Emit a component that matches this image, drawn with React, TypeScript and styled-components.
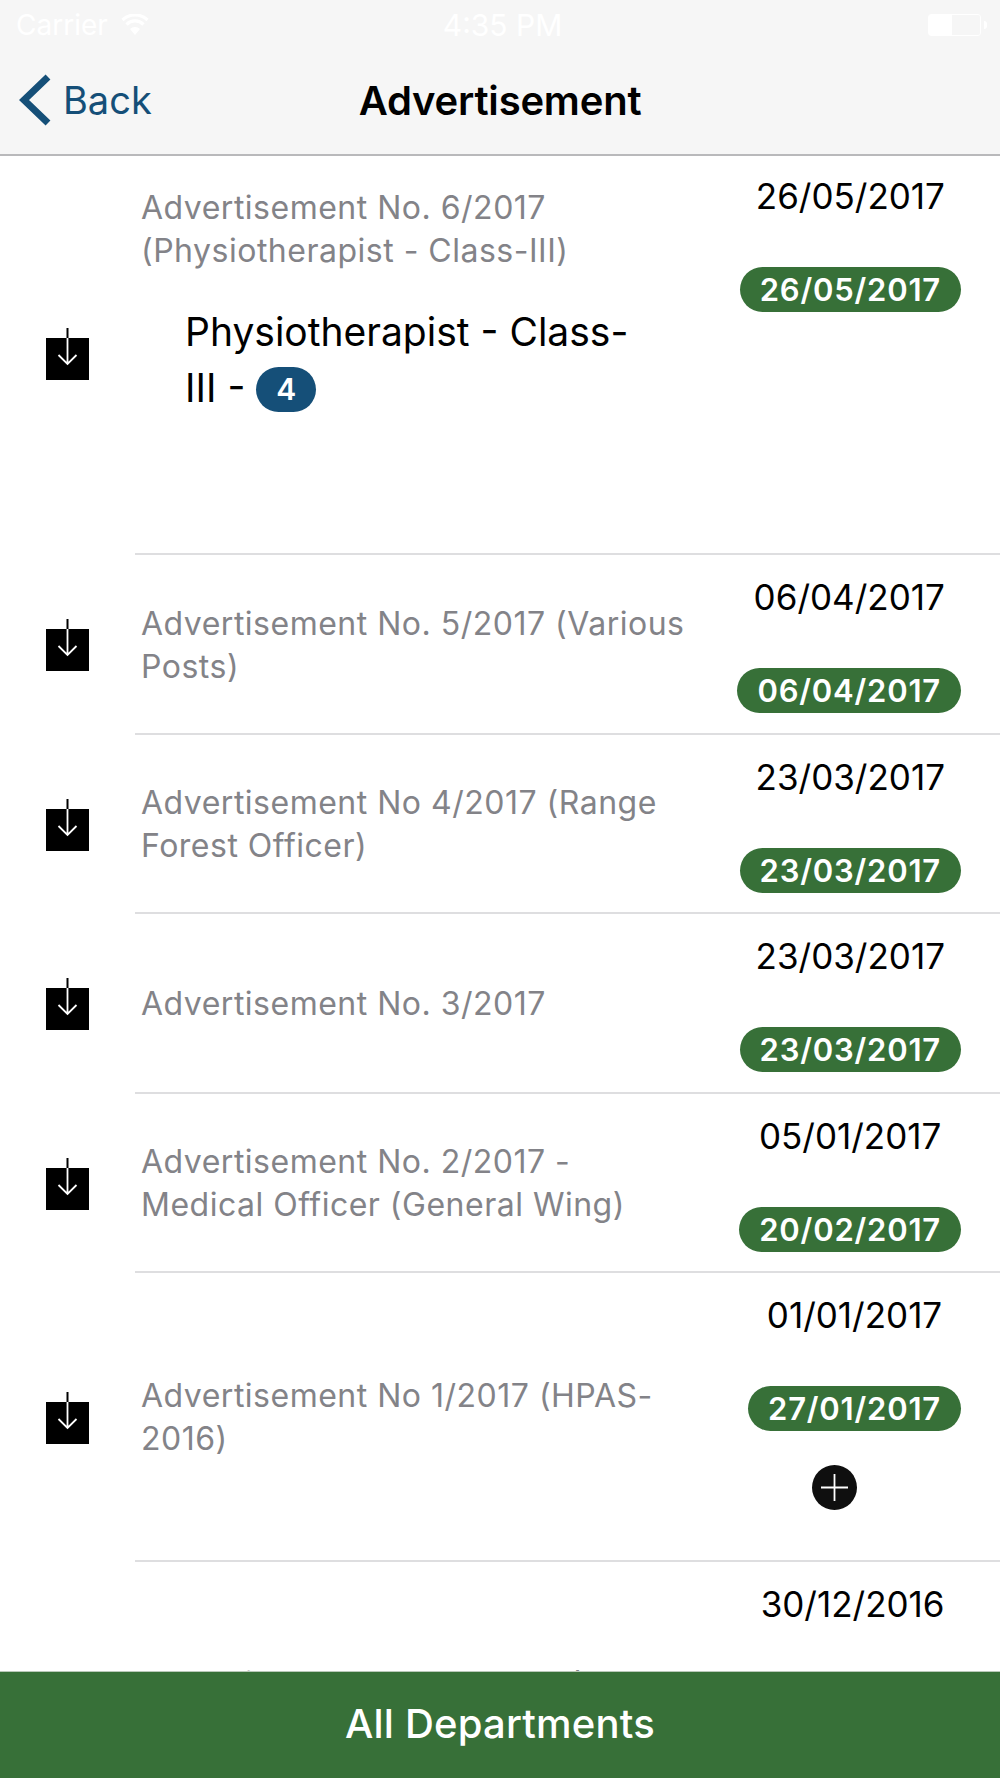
import React from 'react';
import styled, { createGlobalStyle } from 'styled-components';

const GlobalStyle = createGlobalStyle`
  html, body {
    margin: 0;
    padding: 0;
    background: #fff;
  }
  body {
    font-family: Inter, "Liberation Sans", sans-serif;
  }
`;

const Screen = styled.div`
  position: relative;
  width: 1000px;
  height: 1778px;
  overflow: hidden;
  background: #fff;
`;

const TopBar = styled.header`
  height: 154px;
  background: #f6f6f6;
  border-bottom: 2px solid #b9b9bb;
  box-sizing: content-box;
`;

const StatusBar = styled.div`
  display: grid;
  grid-template-columns: 1fr auto 1fr;
  align-items: center;
  height: 50px;
  padding: 0 19px 0 16px;
  color: #fff;
  font-size: 28px;
`;

const Carrier = styled.div`
  display: flex;
  align-items: center;
  gap: 13px;
`;

const Clock = styled.div`
  margin-left: 8px;
  font-size: 30px;
`;

const Battery = styled.div`
  position: relative;
  justify-self: end;
  width: 53px;
  height: 22px;
  border: 1px solid #fff;
  border-radius: 3px;
  box-sizing: border-box;
  background: linear-gradient(to right, #fff 45%, transparent 45%);
  &::after {
    content: '';
    position: absolute;
    right: -7px;
    top: 6px;
    width: 3px;
    height: 8px;
    border-radius: 0 3px 3px 0;
    background: #fff;
  }
`;

const NavBar = styled.nav`
  position: relative;
  display: flex;
  align-items: center;
  justify-content: center;
  height: 100px;
`;

const BackLink = styled.a`
  position: absolute;
  left: 19px;
  top: 0;
  bottom: 0;
  display: flex;
  align-items: center;
  gap: 12px;
  color: #154f78;
  font-size: 38px;
`;

const NavTitle = styled.h1`
  margin: 0;
  color: #000;
  font-size: 40px;
  font-weight: 600;
  letter-spacing: -0.2px;
`;

const Row = styled.div<{ $height: number }>`
  position: relative;
  display: flex;
  align-items: stretch;
  height: ${(p) => p.$height}px;
  box-sizing: border-box;
  &::after {
    content: '';
    position: absolute;
    left: 135px;
    right: 0;
    bottom: 0;
    height: 2px;
    background: #dedee0;
  }
`;

const IconCell = styled.div<{ $top?: boolean }>`
  flex: 0 0 135px;
  display: flex;
  align-items: center;
  justify-content: center;
  padding-bottom: ${(p) => (p.$top ? 3 : 0)}px;
`;

const Body = styled.div<{ $top?: boolean }>`
  flex: 0 0 552px;
  margin-left: 6px;
  display: flex;
  flex-direction: column;
  justify-content: ${(p) => (p.$top ? 'flex-start' : 'center')};
  padding: ${(p) => (p.$top ? '30px 0 0' : '0 0 1px')};
`;

const Title = styled.div<{ $lines?: number }>`
  min-height: ${(p) => (p.$lines ?? 1) * 43}px;
  color: #838388;
  font-size: 32px;
  line-height: 43px;
  letter-spacing: 0.5px;
`;

const SubPost = styled.div`
  margin: 32px 0 0 44px;
  width: 470px;
  color: #000;
  font-size: 39px;
  line-height: 56px;
`;

const CountBadge = styled.span`
  display: inline-block;
  min-width: 60px;
  height: 45px;
  border-radius: 23px;
  background: #154f78;
  color: #fff;
  font-size: 30px;
  font-weight: 600;
  line-height: 45px;
  text-align: center;
  vertical-align: 2px;
`;

const DateCell = styled.div<{ $top?: boolean }>`
  margin-left: auto;
  margin-right: 39px;
  display: flex;
  flex-direction: column;
  align-items: center;
  padding-top: ${(p) => (p.$top ? 19 : 21)}px;
`;

const DateText = styled.div`
  color: #000;
  font-size: 35px;
  line-height: 42px;
`;

const DatePill = styled.div`
  margin-top: 50px;
  height: 45px;
  padding: 0 20px;
  border-radius: 23px;
  background: #377038;
  color: #fff;
  font-size: 31px;
  font-weight: 600;
  line-height: 45px;
  letter-spacing: 0.8px;
`;

const PlusButton = styled.div`
  margin: 34px 40px 0 0;
  width: 45px;
  height: 45px;
  line-height: 0;
`;

const BottomButton = styled.button`
  position: absolute;
  left: 0;
  right: 0;
  bottom: 0;
  height: 107px;
  padding: 0 0 4px;
  border: none;
  border-top: 1px solid #b9c9b9;
  background: #377038;
  color: #fff;
  font-family: inherit;
  font-size: 40px;
  font-weight: 500;
  letter-spacing: 0.2px;
`;

function WifiIcon() {
  return (
    <svg width="28" height="22" viewBox="0 0 28 22">
      <path d="M14 21 9 15a7 7 0 0 1 10 0Z" fill="#fff" />
      <path d="M5.5 10.5a12 12 0 0 1 17 0M1.5 6a18 18 0 0 1 25 0" fill="none" stroke="#fff" strokeWidth="3.2" />
    </svg>
  );
}

function BackChevron() {
  return (
    <svg width="32" height="52" viewBox="0 0 32 52">
      <path d="M29 3 5 26l24 23" fill="none" stroke="#154f78" strokeWidth="7" />
    </svg>
  );
}

function DownloadIcon() {
  return (
    <svg width="44" height="52" viewBox="0 0 44 52">
      <rect x="0" y="10" width="43" height="42" fill="#000" />
      <path d="M21.5 0v35" stroke="#000" strokeWidth="2" />
      <path d="M21.5 10v25M12.5 27l9 9 9-9" fill="none" stroke="#fff" strokeWidth="1.8" />
    </svg>
  );
}

function PlusIcon() {
  return (
    <svg width="45" height="45" viewBox="0 0 45 45">
      <circle cx="22.5" cy="22.5" r="22.5" fill="#0f0f0f" />
      <path d="M22.5 9v27M9 22.5h27" stroke="#fff" strokeWidth="1.8" />
    </svg>
  );
}

interface IAd {
  title: string;
  date: string;
  pill: string;
  height: number;
  lines?: number;
  post?: string;
  count?: number;
  more?: boolean;
}

const ads: IAd[] = [
  { title: 'Advertisement No. 6/2017 (Physiotherapist - Class-III)', date: '26/05/2017', pill: '26/05/2017', height: 399, post: 'Physiotherapist - Class-III - ', count: 4 },
  { title: 'Advertisement No. 5/2017 (Various Posts)', date: '06/04/2017', pill: '06/04/2017', height: 180 },
  { title: 'Advertisement No 4/2017 (Range Forest Officer)', date: '23/03/2017', pill: '23/03/2017', height: 179 },
  { title: 'Advertisement No. 3/2017', date: '23/03/2017', pill: '23/03/2017', height: 180 },
  { title: 'Advertisement No. 2/2017 - Medical Officer (General Wing)', date: '05/01/2017', pill: '20/02/2017', height: 179 },
  { title: 'Advertisement No 1/2017 (HPAS-2016)', date: '01/01/2017', pill: '27/01/2017', height: 289, more: true },
  { title: 'Advertisement No. 17/2016 (Hall', date: '30/12/2016', pill: '30/12/2016', height: 287, lines: 2 },
];

export default function App() {
  return (
    <Screen>
      <GlobalStyle />
      <TopBar>
        <StatusBar>
          <Carrier>
            Carrier
            <WifiIcon />
          </Carrier>
          <Clock>4:35 PM</Clock>
          <Battery />
        </StatusBar>
        <NavBar>
          <BackLink>
            <BackChevron />
            Back
          </BackLink>
          <NavTitle>Advertisement</NavTitle>
        </NavBar>
      </TopBar>
      {ads.map((ad) => (
        <Row key={ad.title} $height={ad.height}>
          <IconCell $top={!!ad.post}>
            <DownloadIcon />
          </IconCell>
          <Body $top={!!ad.post}>
            <Title $lines={ad.lines}>{ad.title}</Title>
            {ad.post && (
              <SubPost>
                {ad.post}
                <CountBadge>{ad.count}</CountBadge>
              </SubPost>
            )}
          </Body>
          <DateCell $top={!!ad.post}>
            <DateText>{ad.date}</DateText>
            <DatePill>{ad.pill}</DatePill>
            {ad.more && (
              <PlusButton>
                <PlusIcon />
              </PlusButton>
            )}
          </DateCell>
        </Row>
      ))}
      <BottomButton>All Departments</BottomButton>
    </Screen>
  );
}
